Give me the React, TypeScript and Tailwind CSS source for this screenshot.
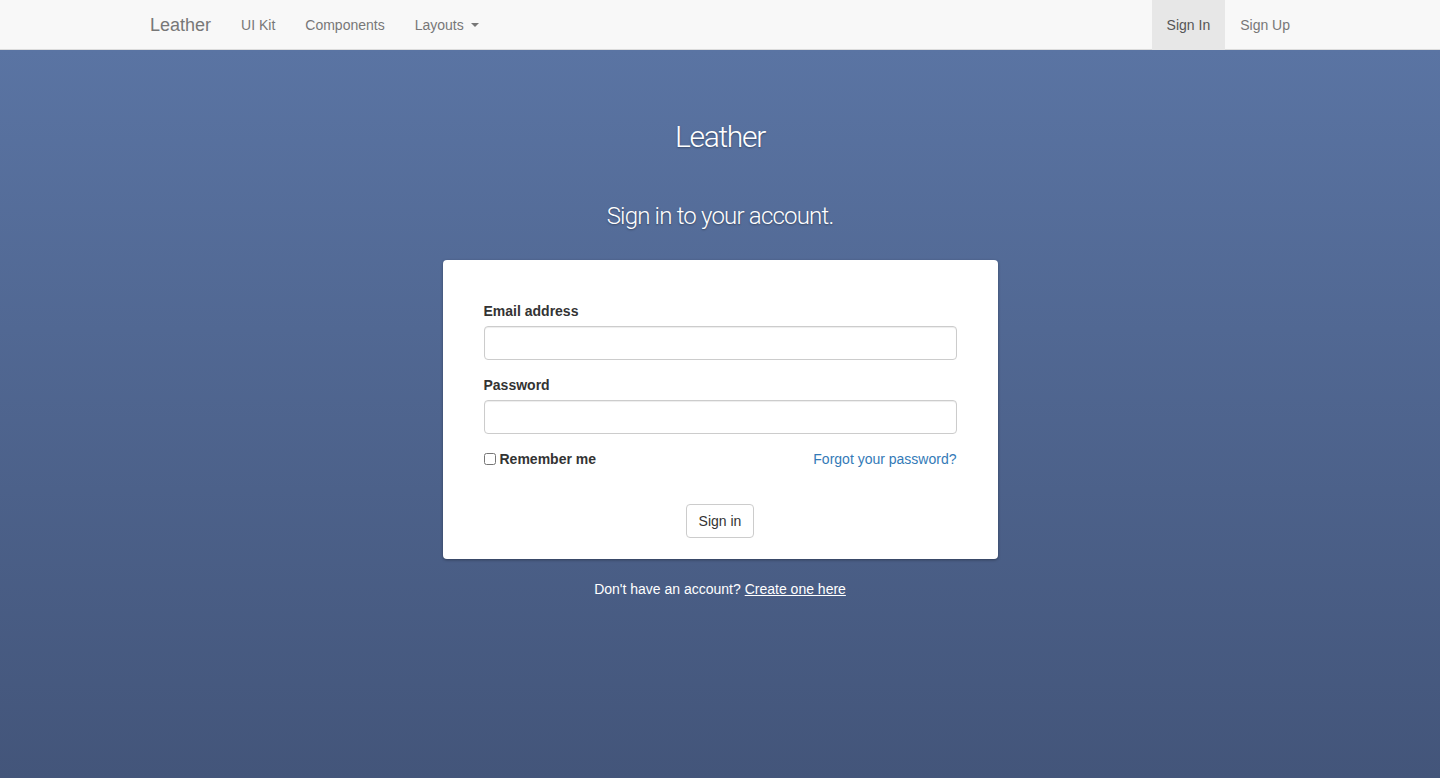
import { useState } from 'react';

const sans = { fontFamily: '"Liberation Sans", Arial, sans-serif' };

function Navbar() {
  return (
    <nav className="h-[50px] bg-[#f8f8f8] border-b border-[#dcdcdc]">
      <div className="w-[1170px] mx-auto px-[15px] flex items-stretch h-full">
        <a className="-ml-[15px] px-[15px] h-[50px] flex items-center text-[18px] text-[#777]">Leather</a>
        <ul className="flex">
          <li><a className="px-[15px] h-[50px] flex items-center text-[14px] text-[#777]">UI Kit</a></li>
          <li><a className="px-[15px] h-[50px] flex items-center text-[14px] text-[#777]">Components</a></li>
          <li>
            <a className="px-[15px] h-[50px] flex items-center text-[14px] text-[#777]">
              Layouts
              <span className="ml-[7px] inline-block w-0 h-0 border-t-4 border-t-[#777] border-x-4 border-x-transparent" />
            </a>
          </li>
        </ul>
        <ul className="flex ml-auto -mr-[15px]">
          <li><a className="px-[15px] h-[50px] flex items-center text-[14px] text-[#555] bg-[#e7e7e7]">Sign In</a></li>
          <li><a className="px-[15px] h-[50px] flex items-center text-[14px] text-[#777]">Sign Up</a></li>
        </ul>
      </div>
    </nav>
  );
}

export default function App() {
  const [remember, setRemember] = useState(false);

  return (
    <div className="min-h-screen flex flex-col text-[#333]" style={sans}>
      <Navbar />
      <main className="flex-1 bg-gradient-to-b from-[#5a74a3] to-[#43557a] pb-10">
        <div className="w-[555px] mx-auto">
          <h2
            className="mt-[68px] text-center text-white text-[30px] leading-[38px] font-light tracking-[-1.3px] [text-shadow:0_1px_2px_rgba(0,0,0,0.35)]"
            style={{ fontFamily: 'Roboto, "Liberation Sans", sans-serif' }}
          >
            Leather
          </h2>
          <h3
            className="mt-[44px] text-center text-white text-[24px] leading-[32px] font-light tracking-[-0.8px] [text-shadow:0_1px_2px_rgba(0,0,0,0.35)]"
            style={{ fontFamily: 'Roboto, "Liberation Sans", sans-serif' }}
          >
            Sign in to your account.
          </h3>

          {/* Card */}
          <div className="mt-[28px] bg-white rounded-[4px] shadow-[0_1px_3px_rgba(0,0,0,0.35)] px-[41px] pt-[41px] pb-[21px]">
            <form onSubmit={(e) => e.preventDefault()}>
              <div className="mb-[15px]">
                <label className="block mb-[5px] text-[14px] leading-[20px] font-bold">Email address</label>
                <input
                  type="email"
                  className="block w-full h-[34px] px-3 border border-[#ccc] rounded-[4px] text-[14px] shadow-[inset_0_1px_1px_rgba(0,0,0,0.075)] outline-none"
                />
              </div>
              <div className="mb-[15px]">
                <label className="block mb-[5px] text-[14px] leading-[20px] font-bold">Password</label>
                <input
                  type="password"
                  className="block w-full h-[34px] px-3 border border-[#ccc] rounded-[4px] text-[14px] shadow-[inset_0_1px_1px_rgba(0,0,0,0.075)] outline-none"
                />
              </div>
              <div className="flex items-center justify-between h-[20px]">
                <label className="flex items-center text-[14px] font-bold">
                  <input
                    type="checkbox"
                    checked={remember}
                    onChange={() => setRemember(!remember)}
                    className="w-[12px] h-[12px] mr-[4px] m-0"
                  />
                  Remember me
                </label>
                <a className="text-[14px] text-[#337ab7] cursor-pointer">Forgot your password?</a>
              </div>
              <div className="mt-[35px] flex justify-center">
                <button
                  type="submit"
                  className="h-[34px] px-3 border border-[#ccc] rounded-[4px] bg-white text-[14px] text-[#333]"
                >
                  Sign in
                </button>
              </div>
            </form>
          </div>

          <p className="mt-[20px] text-center text-white text-[14px] leading-[20px]">
            Don't have an account? <a className="underline cursor-pointer">Create one here</a>
          </p>
        </div>
      </main>
    </div>
  );
}
